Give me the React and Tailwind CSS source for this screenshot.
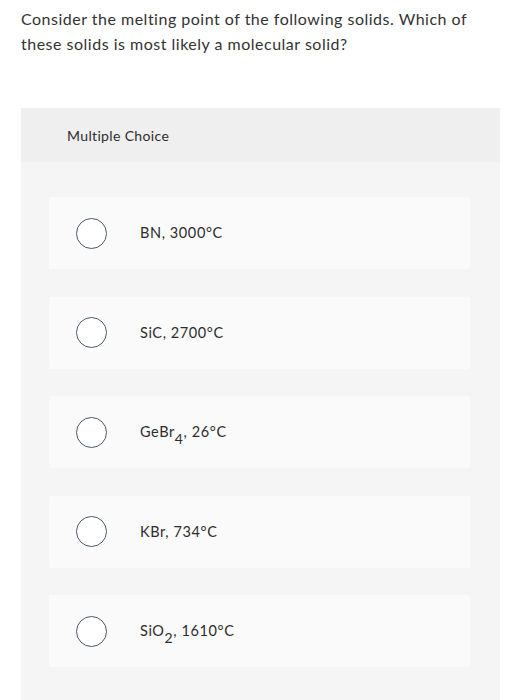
import React from "react";

const sub = "text-[14px] align-[-3px] leading-none";
const options = [
  { label: <>BN, 3000°C</> },
  { label: <>SiC, 2700°C</> },
  { label: <>GeBr<sub className={sub}>4</sub>, 26°C</> },
  { label: <>KBr, 734°C</> },
  { label: <>SiO<sub className={sub}>2</sub>, 1610°C</> },
];

export default function App() {
  return (
    <div className="min-h-[700px] bg-white text-[#333333]" style={{ fontFamily: "Lato, 'Open Sans', sans-serif" }}>
      <div className="px-[21px] pt-[6px]">
        <p className="text-[16px] leading-[25px] tracking-[0.5px] pr-[10px]">
          Consider the melting point of the following solids. Which of these solids is most likely a molecular solid?
        </p>
      </div>
      <div className="ml-[21px] mr-[9px] mt-[52px] bg-[#f5f5f5] pb-[40px]">
        <div className="h-[54px] bg-[#efefef] flex items-center pl-[46px] text-[14px] tracking-[0.35px] text-[#2d2d2d]">
          Multiple Choice
        </div>
        <div className="pt-[35px] pl-[28px] pr-[30px] flex flex-col gap-[27.5px]">
          {options.map((o, i) => (
            <div key={i} className="h-[72px] bg-[#fafafa] rounded-[2px] flex items-center pl-[27px]">
              <div className="w-[31px] h-[31px] rounded-full border-[1.5px] border-[#4b5a6b] bg-white shrink-0" />
              <div className="ml-[33px] text-[14.5px] tracking-[0.6px] text-[#2d2d2d]">{o.label}</div>
            </div>
          ))}
        </div>
      </div>
    </div>
  );
}
